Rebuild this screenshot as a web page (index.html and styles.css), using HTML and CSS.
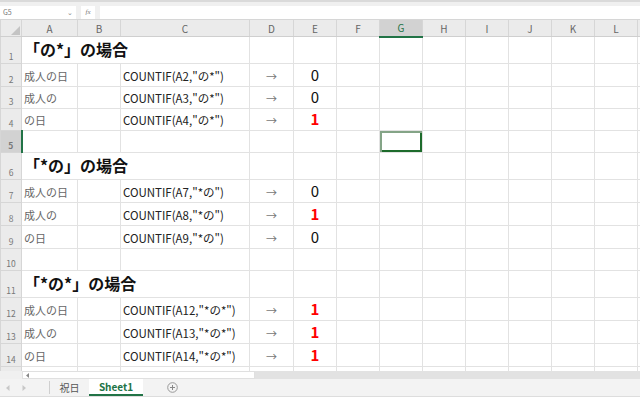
FILE: index.html
```html
<!DOCTYPE html>
<html lang="ja">
<head>
    <meta charset="UTF-8">
    <title>COUNTIF</title>
    <link rel="stylesheet" href="styles.css">
</head>
<body>
    <div class="formula-bar">
        <div class="name-box"><span>G5</span><span class="drop">&#8964;</span></div>
        <div class="fx-box"><i>fx</i></div>
        <div class="formula-input"></div>
    </div>
    <div class="grid-wrap">
        <table class="sheet">
            <colgroup>
                <col class="c-rh"><col class="c-a"><col class="c-b"><col class="c-c"><col class="c-d">
                <col class="c-n"><col class="c-n"><col class="c-n"><col class="c-n"><col class="c-n"><col class="c-n"><col class="c-n"><col class="c-n"><col class="c-m">
            </colgroup>
            <tr class="head">
                <th class="corner"><span class="tri"></span></th>
                <th>A</th><th>B</th><th>C</th><th>D</th><th>E</th><th>F</th><th class="sel">G</th><th>H</th><th>I</th><th>J</th><th>K</th><th>L</th><th></th>
            </tr>
            <tr class="r-big">
                <th>1</th><td colspan="3" class="title">「の*」の場合</td><td></td><td></td><td></td><td></td><td></td><td></td><td></td><td></td><td></td><td></td>
            </tr>
            <tr class="r-23">
                <th>2</th><td class="txt">成人の日</td><td></td><td class="fm">COUNTIF(A2,"の*")</td><td class="arw">→</td><td class="num">0</td><td></td><td></td><td></td><td></td><td></td><td></td><td></td><td></td>
            </tr>
            <tr class="r-22">
                <th>3</th><td class="txt">成人の</td><td></td><td class="fm">COUNTIF(A3,"の*")</td><td class="arw">→</td><td class="num">0</td><td></td><td></td><td></td><td></td><td></td><td></td><td></td><td></td>
            </tr>
            <tr class="r-22">
                <th>4</th><td class="txt">の日</td><td></td><td class="fm">COUNTIF(A4,"の*")</td><td class="arw">→</td><td class="num hit">1</td><td></td><td></td><td></td><td></td><td></td><td></td><td></td><td></td>
            </tr>
            <tr class="r-22">
                <th class="sel-row">5</th><td></td><td></td><td></td><td></td><td></td><td></td><td class="active"></td><td></td><td></td><td></td><td></td><td></td><td></td>
            </tr>
            <tr class="r-big">
                <th>6</th><td colspan="3" class="title">「*の」の場合</td><td></td><td></td><td></td><td></td><td></td><td></td><td></td><td></td><td></td><td></td>
            </tr>
            <tr class="r-23">
                <th>7</th><td class="txt">成人の日</td><td></td><td class="fm">COUNTIF(A7,"*の")</td><td class="arw">→</td><td class="num">0</td><td></td><td></td><td></td><td></td><td></td><td></td><td></td><td></td>
            </tr>
            <tr class="r-23">
                <th>8</th><td class="txt">成人の</td><td></td><td class="fm">COUNTIF(A8,"*の")</td><td class="arw">→</td><td class="num hit">1</td><td></td><td></td><td></td><td></td><td></td><td></td><td></td><td></td>
            </tr>
            <tr class="r-23">
                <th>9</th><td class="txt">の日</td><td></td><td class="fm">COUNTIF(A9,"*の")</td><td class="arw">→</td><td class="num">0</td><td></td><td></td><td></td><td></td><td></td><td></td><td></td><td></td>
            </tr>
            <tr class="r-22">
                <th>10</th><td></td><td></td><td></td><td></td><td></td><td></td><td></td><td></td><td></td><td></td><td></td><td></td><td></td>
            </tr>
            <tr class="r-26">
                <th>11</th><td colspan="3" class="title">「*の*」の場合</td><td></td><td></td><td></td><td></td><td></td><td></td><td></td><td></td><td></td><td></td>
            </tr>
            <tr class="r-23">
                <th>12</th><td class="txt">成人の日</td><td></td><td class="fm">COUNTIF(A12,"*の*")</td><td class="arw">→</td><td class="num hit">1</td><td></td><td></td><td></td><td></td><td></td><td></td><td></td><td></td>
            </tr>
            <tr class="r-23">
                <th>13</th><td class="txt">成人の</td><td></td><td class="fm">COUNTIF(A13,"*の*")</td><td class="arw">→</td><td class="num hit">1</td><td></td><td></td><td></td><td></td><td></td><td></td><td></td><td></td>
            </tr>
            <tr class="r-23">
                <th>14</th><td class="txt">の日</td><td></td><td class="fm">COUNTIF(A14,"*の*")</td><td class="arw">→</td><td class="num hit">1</td><td></td><td></td><td></td><td></td><td></td><td></td><td></td><td></td>
            </tr>
            <tr class="r-23">
                <th></th><td></td><td></td><td></td><td></td><td></td><td></td><td></td><td></td><td></td><td></td><td></td><td></td><td></td>
            </tr>
        </table>
    </div>
    <div class="hscroll">
        <div class="hs-left"></div>
        <div class="hs-thumb">
            <svg width="4" height="5" viewBox="0 0 4 5"><path d="M3 0 L0 2.5 L3 5 Z" fill="#888"/></svg>
        </div>
        <div class="hs-track"></div>
    </div>
    <div class="tabs">
        <div class="tab-nav">
            <svg width="4" height="6" viewBox="0 0 4 6"><path d="M3.5 0 L0 3 L3.5 6 Z" fill="#c8c8c8"/></svg>
            <svg width="4" height="6" viewBox="0 0 4 6"><path d="M0.5 0 L4 3 L0.5 6 Z" fill="#c8c8c8"/></svg>
        </div>
        <div class="tab">祝日</div>
        <div class="tab tab-active">Sheet1</div>
        <div class="tab-add">
            <svg width="11" height="11" viewBox="0 0 11 11"><circle cx="5.5" cy="5.5" r="4.8" fill="none" stroke="#999" stroke-width="1"/><path d="M5.5 3 V8 M3 5.5 H8" stroke="#888" stroke-width="1"/></svg>
        </div>
    </div>
</body>
</html>
```

FILE: styles.css
```css
*{
    box-sizing: border-box;
}
body{
    margin: 0;
    width: 640px;
    height: 397px;
    overflow: hidden;
    background: #ffffff;
    font-family: "Noto Sans CJK JP", "Noto Sans", sans-serif;
}

/* formula bar */
.formula-bar{
    height: 19px;
    display: flex;
    align-items: center;
    gap: 5px;
    padding: 4px 0 1px 0;
    background: #f0f0f0;
    border-top: 2px solid #dadada;
}
.name-box{
    width: 76px;
    height: 13px;
    background: #ffffff;
    display: flex;
    justify-content: space-between;
    align-items: center;
    padding: 0 3px;
    font-size: 7px;
    color: #777777;
}
.name-box .drop{
    font-size: 7px;
    line-height: 4px;
    color: #888888;
}
.fx-box{
    width: 14px;
    height: 13px;
    background: #ffffff;
    font-family: "Liberation Serif", serif;
    font-size: 7px;
    color: #777777;
    display: flex;
    align-items: center;
    justify-content: center;
}
.formula-input{
    flex: 1;
    height: 13px;
    background: #ffffff;
}

/* grid */
.grid-wrap{
    height: 352px;
    overflow: hidden;
}
.sheet{
    border-collapse: collapse;
    table-layout: fixed;
    width: 640px;
}
.c-rh{ width: 21px; }
.c-a{ width: 56px; }
.c-b{ width: 43px; }
.c-c{ width: 129px; }
.c-d{ width: 44px; }
.c-n{ width: 43px; }
.c-m{ width: 3px; }

.sheet td{
    border: 1px solid #e2e2e2;
    padding: 0 2px 2px 2px;
    vertical-align: bottom;
    white-space: nowrap;
    overflow: hidden;
}
.sheet th{
    background: #ebebeb;
    border: 1px solid #d6d6d6;
    font-weight: normal;
    color: #666666;
    padding: 0;
    overflow: hidden;
}
.sheet tr.head{
    height: 17px;
}
.sheet tr.head th{
    font-size: 10px;
    border-bottom-color: #cfcfcf;
}
.sheet tr.head th.sel{
    background: #d2d2d2;
    color: #217346;
    border-bottom: 2px solid #217346;
}
.sheet th.corner{
    position: relative;
}
.corner .tri{
    position: absolute;
    right: 1px;
    bottom: 1px;
    width: 0;
    height: 0;
    border-left: 9px solid transparent;
    border-bottom: 9px solid #c4c4c4;
}
.sheet tr:not(.head) th{
    font-size: 8.5px;
    vertical-align: bottom;
    padding-bottom: 1px;
    color: #777777;
}
.sheet th.sel-row{
    background: #d2d2d2;
    color: #217346;
    font-weight: bold;
    border-right: 2px solid #217346;
}

.r-big{ height: 27px; }
.r-26{ height: 26px; }
.r-23{ height: 23px; }
.r-22{ height: 22px; }

.title{
    font-size: 16px;
    font-weight: bold;
    color: #111111;
    padding-left: 2px;
    padding-bottom: 1px;
}
.txt{
    font-size: 11px;
    color: #666666;
}
.fm{
    font-size: 11.5px;
    color: #222222;
}
.arw{
    text-align: center;
    font-size: 11px;
    color: #777777;
}
.num{
    text-align: center;
    font-size: 15px;
    color: #111111;
    padding-bottom: 1px;
    line-height: 18px;
}
.num.hit{
    color: #ff0000;
    font-weight: bold;
}
.sheet td.active{
    box-shadow: inset 2px 2px 0 #84a487, inset -2px -2px 0 #1d6b2b;
}

/* horizontal scroll */
.hscroll{
    height: 8px;
    display: flex;
}
.hs-left{
    width: 22px;
    background: #f0f0f0;
}
.hs-thumb{
    width: 233px;
    background: #ffffff;
    border: 1px solid #e0e0e0;
    display: flex;
    align-items: center;
    padding-left: 3px;
}
.hs-track{
    flex: 1;
    background: #e2e2e2;
}

/* sheet tabs */
.tabs{
    height: 18px;
    display: flex;
    align-items: stretch;
    background: #f3f3f3;
    border-bottom: 1px solid #dddddd;
}
.tab-nav{
    width: 50px;
    display: flex;
    gap: 12px;
    align-items: center;
    padding-left: 6px;
    border-right: 1px solid #cfcfcf;
    margin: 2px 0;
}
.tab{
    width: 39px;
    display: flex;
    align-items: center;
    justify-content: center;
    font-size: 10px;
    color: #555555;
}
.tab-active{
    width: 54px;
    background: #ffffff;
    color: #217346;
    font-weight: bold;
    font-size: 10px;
    border-bottom: 2px solid #217346;
}
.tab-add{
    display: flex;
    align-items: center;
    margin-left: 24px;
}
```
